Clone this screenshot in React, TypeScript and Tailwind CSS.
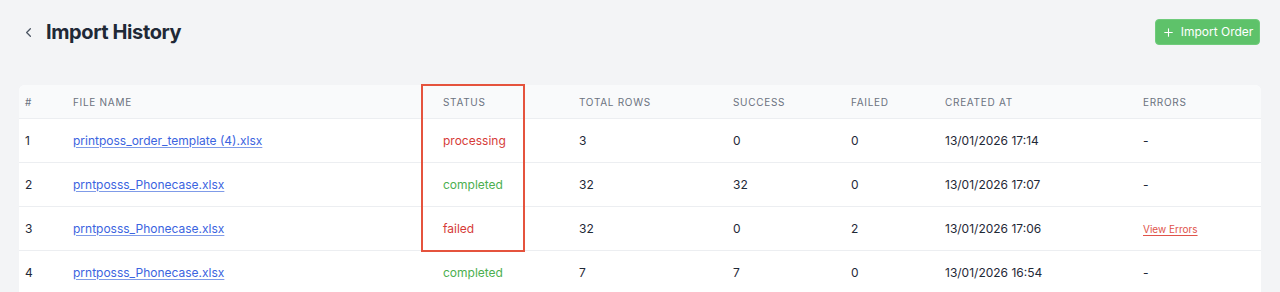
import { ChevronLeft, Plus } from 'lucide-react';

type Row = {
  id: number;
  file: string;
  status: 'processing' | 'completed' | 'failed';
  total: number;
  success: number;
  failed: number;
  created: string;
  hasErrors: boolean;
};

const rows: Row[] = [
  { id: 1, file: 'printposs_order_template (4).xlsx', status: 'processing', total: 3, success: 0, failed: 0, created: '13/01/2026 17:14', hasErrors: false },
  { id: 2, file: 'prntposss_Phonecase.xlsx', status: 'completed', total: 32, success: 32, failed: 0, created: '13/01/2026 17:07', hasErrors: false },
  { id: 3, file: 'prntposss_Phonecase.xlsx', status: 'failed', total: 32, success: 0, failed: 2, created: '13/01/2026 17:06', hasErrors: true },
  { id: 4, file: 'prntposss_Phonecase.xlsx', status: 'completed', total: 7, success: 7, failed: 0, created: '13/01/2026 16:54', hasErrors: false },
];

const statusColor: Record<Row['status'], string> = {
  processing: 'text-[#d63b38]',
  completed: 'text-[#4caf50]',
  failed: 'text-[#d63b38]',
};

export default function App() {
  return (
    <div className="min-h-[292px] bg-[#f3f4f6] font-['Inter',sans-serif] text-[#1f2937]">
      {/* Header */}
      <div className="flex items-center justify-between pl-[21px] pr-5 pt-[19px]">
        <div className="flex items-center gap-[10px]">
          <ChevronLeft className="h-[15px] w-[15px] text-[#4b5563]" strokeWidth={2} />
          <h1 className="text-[20px] font-bold leading-[26px] tracking-[-0.02em] text-[#1f2937]">Import History</h1>
        </div>
        <button className="flex h-[26px] w-[105px] items-center justify-center gap-[6px] rounded-[4px] border border-[#6fcb7b] bg-[#5ec26a] text-[12px] text-white">
          <Plus className="h-[13px] w-[13px]" strokeWidth={2} />
          Import Order
        </button>
      </div>

      {/* Table */}
      <div className="mx-[19px] mt-[40px] overflow-hidden rounded-t-[6px] bg-white">
        <table className="w-full table-fixed border-collapse text-left text-[12px]">
          <colgroup>
            <col className="w-[48px]" />
            <col className="w-[354px]" />
            <col className="w-[152px]" />
            <col className="w-[154px]" />
            <col className="w-[118px]" />
            <col className="w-[94px]" />
            <col className="w-[198px]" />
            <col />
          </colgroup>
          <thead className="bg-[#f9fafb]">
            <tr className="h-[33px] border-b border-[#eceef1] pt-[2px] text-[10px] font-normal uppercase tracking-[0.07em] text-[#6b7280]">
              <th className="pl-[6px] pt-[3px] font-normal">#</th>
              <th className="pl-[6px] pt-[3px] font-normal">File Name</th>
              <th className="pl-[22px] pt-[3px] font-normal">Status</th>
              <th className="pl-[6px] pt-[3px] font-normal">Total Rows</th>
              <th className="pl-[6px] pt-[3px] font-normal">Success</th>
              <th className="pl-[6px] pt-[3px] font-normal">Failed</th>
              <th className="pl-[6px] pt-[3px] font-normal">Created At</th>
              <th className="pl-[6px] pt-[3px] font-normal">Errors</th>
            </tr>
          </thead>
          <tbody>
            {rows.map((r) => (
              <tr key={r.id} className="h-[44px] border-b border-[#eceef1]">
                <td className="pl-[6px] pt-[1px]">{r.id}</td>
                <td className="pl-[6px] pt-[1px]">
                  <a href="#" className="text-[#3b64e0] underline decoration-[#7f9be8] underline-offset-2">{r.file}</a>
                </td>
                <td className={`pl-[22px] pt-[1px] ${statusColor[r.status]}`}>{r.status}</td>
                <td className="pl-[6px] pt-[1px]">{r.total}</td>
                <td className="pl-[6px] pt-[1px]">{r.success}</td>
                <td className="pl-[6px] pt-[1px]">{r.failed}</td>
                <td className="pl-[6px] pt-[1px]">{r.created}</td>
                <td className="pl-[6px] pt-[1px]">
                  {r.hasErrors ? (
                    <a href="#" className="text-[10px] text-[#e0534a] underline underline-offset-2">View Errors</a>
                  ) : (
                    '-'
                  )}
                </td>
              </tr>
            ))}
          </tbody>
        </table>
      </div>

      {/* Highlight around status column */}
      <div className="pointer-events-none absolute left-[421px] top-[84px] h-[168px] w-[104px] border-2 border-[#e5533d]" />
    </div>
  );
}
